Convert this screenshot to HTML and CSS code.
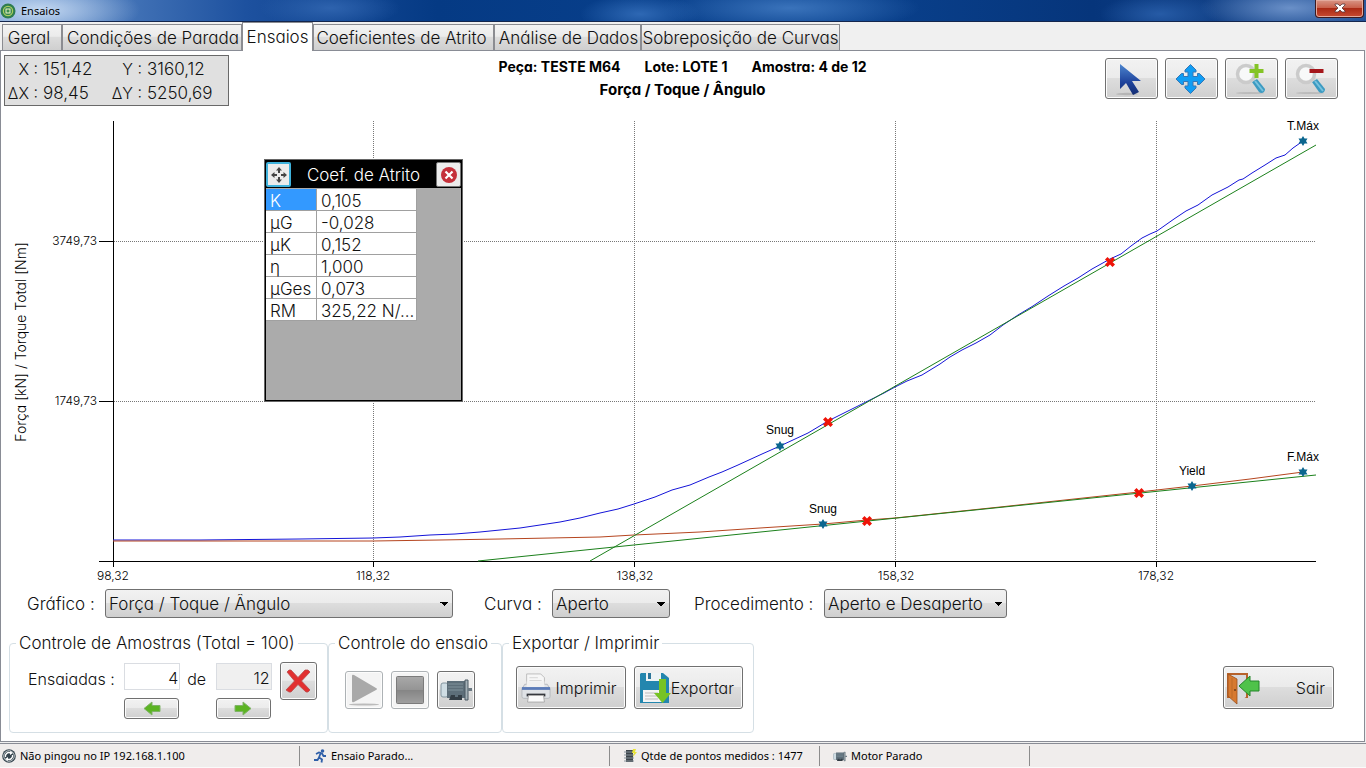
FILE: index.html
```html
<!DOCTYPE html>
<html lang="pt-BR">
<head>
<meta charset="utf-8">
<title>Ensaios</title>
<link rel="stylesheet" href="styles.css">
</head>
<body>
<div class="window">
  <header class="titlebar">
    <svg class="app-icon" width="16" height="16" viewBox="0 0 16 16"><circle cx="8" cy="8" r="7.5" fill="#2f7d50"/><circle cx="8" cy="8" r="4.6" fill="none" stroke="#a9cf5e" stroke-width="1.3"/><rect x="6" y="6" width="4" height="4" fill="#3c8d4d" stroke="#f1f7c5"/></svg>
    <span class="title">Ensaios</span>
    <button class="close" aria-label="Fechar"><svg width="12" height="10" viewBox="0 0 12 10"><path d="M1 1h3l2 2 2-2h3v1L8 5l3 3v1H8L6 7 4 9H1V8l3-3-3-3z" fill="#fff" stroke="#583638" stroke-width=".8"/></svg></button>
  </header>

  <nav class="tabs" role="tablist">
    <button class="tab tab-geral" role="tab">Geral</button>
    <button class="tab tab-cond" role="tab">Condições de Parada</button>
    <button class="tab tab-ensaios active" role="tab" aria-selected="true">Ensaios</button>
    <button class="tab tab-coef" role="tab">Coeficientes de Atrito</button>
    <button class="tab tab-dados" role="tab">Análise de Dados</button>
    <button class="tab tab-curvas" role="tab">Sobreposição de Curvas</button>
  </nav>

  <main class="page">
    <section class="head">
      <div class="readout">
        <span class="r">X :</span><span>151,42</span><span class="r">Y :</span><span>3160,12</span>
        <span class="r">ΔX :</span><span>98,45</span><span class="r">ΔY :</span><span>5250,69</span>
      </div>
      <div class="heading">
        <div class="heading-line"><span>Peça: TESTE M64</span><span>Lote: LOTE 1</span><span>Amostra: 4 de 12</span></div>
        <div class="heading-line heading-sub">Força / Toque / Ângulo</div>
      </div>
      <div class="tools">
        <button class="btn tool" aria-label="Selecionar"><svg width="32" height="34" viewBox="0 0 32 34"><defs><linearGradient id="arrow" x2="0" y2="1"><stop stop-color="#4d86cf"/><stop offset=".6" stop-color="#1e429b"/><stop offset="1" stop-color="#142d72"/></linearGradient></defs><ellipse cx="12" cy="32" rx="11" ry="1.2" fill="#b5b5b5"/><path d="M5 2v25l6-6 7 12 6-3-7-11h9z" fill="url(#arrow)"/></svg></button>
        <button class="btn tool" aria-label="Mover"><svg width="32" height="32" viewBox="0 0 32 32"><path d="M15.500 1.500l5.500 5.500v2h-3v4.500h4.500v-3h2L30 16l-5.500 5.500h-2v-3H18V23h3v2l-5.500 5.500L10 25v-2h3v-4.500H8.500v3h-2L1 16l5.500-5.500h2v3H13V9h-3V7z" fill="#109df4" stroke="#3477b5" stroke-width="1" stroke-linejoin="round"/></svg></button>
        <button class="btn tool" aria-label="Ampliar"><svg width="34" height="34" viewBox="0 0 34 34"><ellipse cx="16" cy="31" rx="14" ry="1" fill="#bbb"/><path d="M18 20l5-3 8 10q0 3-3 4-2 0-3-1z" fill="#3c9bc2"/><path d="M21 19l8 10" stroke="#79c2dd" stroke-width="2"/><circle cx="12" cy="12" r="8.500" fill="#f8f9f9" stroke="#cbcbcb" stroke-width="3.500"/><path d="M20.500 2h4v5h5v4h-5v5h-4v-5h-5v-4h5z" fill="#84c426"/></svg></button>
        <button class="btn tool" aria-label="Reduzir"><svg width="34" height="34" viewBox="0 0 34 34"><ellipse cx="16" cy="31" rx="14" ry="1" fill="#bbb"/><path d="M18 20l5-3 8 10q0 3-3 4-2 0-3-1z" fill="#3c9bc2"/><path d="M21 19l8 10" stroke="#79c2dd" stroke-width="2"/><circle cx="12" cy="12" r="8.500" fill="#f8f9f9" stroke="#cbcbcb" stroke-width="3.500"/><path d="M15.500 7h14v4h-14z" fill="#a5161b"/></svg></button>
      </div>
    </section>

    <section class="chart-area">
      <svg class="chart" viewBox="1 111 1363 474" role="img" aria-label="Força / Torque por ângulo">
        <defs>
          <path id="star" d="M0-5L1.500-2.500 4.500-2.500 3 0 4.500 2.500 1.500 2.500 0 5-1.500 2.500-4.500 2.500-3 0-4.500-2.500-1.500-2.500z" fill="#0b668f"/>
          <path id="cross" d="M-5-2.500L-2.500-5 0-2.500 2.500-5 5-2.500 2.500 0 5 2.500 2.500 5 0 2.500-2.500 5-5 2.500-2.500 0z" fill="#ee1408"/>
        </defs>
        <path class="grid" d="M114 241.500H1316M114 401.500H1316M373.500 121V561M634.500 121V561M895.500 121V561M1156.500 121V561"/>
        <path class="axis" d="M113.500 121V567M99 561.500H1316M99 241.500H113M99 401.500H113M373.500 561V567M634.500 561V567M895.500 561V567M1156.500 561V567"/>
        <path class="line torque" d="M113 540L200 540 300 539 373 538 400 537 430 535 455 534 480 532 500 530 520 528 540 525 560 522 580 518 600 513 618 509 634 504 655 497 672 490 690 485 709 477 722 472 738 465 762 454 780 446 808 433 828 421 846 412 868 401 884 393 895 387 907 381 922 375 940 364 950 357 962 350 976 343 990 335 1003 325 1018 315 1033 306 1048 296 1064 286 1078 278 1092 269 1110 259 1121 254 1131 246 1142 238 1150 234 1157 231 1174 219 1186 211 1198 205 1212 195 1228 187 1239 180 1243 179 1252 173 1265 165 1276 158 1285 155 1293 148 1303 141"/>
        <path class="line force" d="M113 541L373 541 440 540 500 539 600 537 634 535 700 532 760 528 823 524 867 520 895 518 1000 507 1139 492 1192 486 1250 479 1303 472"/>
        <path class="line fit" d="M590 561L1316 145M478 561L1316 475"/>
        <use href="#star" x="780" y="446"/><use href="#star" x="823" y="524"/><use href="#star" x="1192" y="486"/><use href="#star" x="1303" y="472"/><use href="#star" x="1303" y="141"/>
        <use href="#cross" x="828" y="422"/><use href="#cross" x="867" y="521"/><use href="#cross" x="1139" y="493"/><use href="#cross" x="1110" y="262"/>
        <g class="mark"><text x="780" y="434">Snug</text><text x="823" y="513">Snug</text><text x="1192" y="475">Yield</text><text x="1303" y="461">F.Máx</text><text x="1303" y="130">T.Máx</text></g>
        <g class="tick"><text x="113" y="580">98,32</text><text x="373" y="580">118,32</text><text x="635" y="580">138,32</text><text x="896" y="580">158,32</text><text x="1156" y="580">178,32</text></g>
        <g class="tick tick-y"><text x="97" y="245">3749,73</text><text x="97" y="405">1749,73</text></g>
        <text class="axis-name" transform="translate(26 342) rotate(-90)">Força [kN] / Torque Total [Nm]</text>
      </svg>

      <div class="float">
        <div class="float-head">
          <button class="mini mini-move" aria-label="Mover painel"><svg width="18" height="18" viewBox="0 0 18 18"><path d="M9 1l3 3.500H6zM9 17l3-3.500H6zM1 9l3.500-3v6zM17 9l-3.500-3v6z" fill="#444"/><path d="M9 4v3M9 11v3M4 9h3M11 9h3" stroke="#444" stroke-width="2"/></svg></button>
          <span>Coef. de Atrito</span>
          <button class="mini" aria-label="Fechar painel"><svg width="18" height="18" viewBox="0 0 18 18"><circle cx="9" cy="9" r="8" fill="#c5303a"/><path d="M5.500 5.500l7 7M12.500 5.500l-7 7" stroke="#fff" stroke-width="2.200"/></svg></button>
        </div>
        <table class="coefs">
          <tr><td class="sel">K</td><td>0,105</td></tr>
          <tr><td>µG</td><td>-0,028</td></tr>
          <tr><td>µK</td><td>0,152</td></tr>
          <tr><td>η</td><td>1,000</td></tr>
          <tr><td>µGes</td><td>0,073</td></tr>
          <tr><td>RM</td><td>325,22 N/...</td></tr>
        </table>
      </div>
    </section>

    <section class="filters">
      <label for="grafico">Gráfico :</label>
      <select id="grafico" class="combo combo-l"><option>Força / Toque / Ângulo</option></select>
      <label for="curva">Curva :</label>
      <select id="curva" class="combo combo-s"><option>Aperto</option></select>
      <label for="proc">Procedimento :</label>
      <select id="proc" class="combo combo-m"><option>Aperto e Desaperto</option></select>
    </section>

    <section class="bottom">
      <fieldset class="group g-samples">
        <legend>Controle de Amostras (Total = 100)</legend>
        <div class="samples">
          <label for="atual">Ensaiadas :</label>
          <div class="stack">
            <input id="atual" class="num" value="4">
            <button class="btn step" aria-label="Anterior"><svg width="18" height="15" viewBox="0 0 18 15"><path d="M1 7.500L9 1v3.500h8v6H9V14z" fill="#5cb423" stroke="#80b368"/></svg></button>
          </div>
          <label for="total" class="de">de</label>
          <div class="stack">
            <input id="total" class="num ro" value="12" readonly>
            <button class="btn step" aria-label="Próxima"><svg width="18" height="15" viewBox="0 0 18 15"><path d="M17 7.500L9 1v3.500H1v6h8V14z" fill="#5cb423" stroke="#80b368"/></svg></button>
          </div>
          <button class="btn sq" aria-label="Excluir"><svg width="26" height="26" viewBox="0 0 26 26"><path d="M2 4l2-2h2l7 7.500L20 2h3l2 2-8.500 9L25 22l-2 2h-2l-8-7.500L6 24H4l-3-2 8.500-9z" fill="#e23030" stroke="#b84b4b" stroke-width=".8"/></svg></button>
        </div>
      </fieldset>
      <fieldset class="group g-run">
        <legend>Controle do ensaio</legend>
        <div class="run">
          <button class="btn sq off" disabled aria-label="Iniciar"><svg width="32" height="32" viewBox="0 0 32 32"><ellipse cx="16" cy="30.500" rx="15" ry="1" fill="#bbb"/><path d="M4 2q0-2 2-1l22 13q2 1 0 2L6 28q-2 1-2-1z" fill="#a9a9a9"/></svg></button>
          <button class="btn sq off" disabled aria-label="Parar"><svg width="30" height="30" viewBox="0 0 30 30"><defs><linearGradient id="stop" x2="0" y2="1"><stop stop-color="#a9a9a9"/><stop offset=".5" stop-color="#949494"/><stop offset=".5" stop-color="#858585"/><stop offset="1" stop-color="#a0a0a0"/></linearGradient></defs><rect x="1.500" y="1.500" width="27" height="27" rx="1" fill="url(#stop)" stroke="#7b7b7b"/></svg></button>
          <button class="btn sq" aria-label="Motor"><svg width="32" height="24" viewBox="0 0 32 24"><use href="#motor"/></svg></button>
        </div>
      </fieldset>
      <fieldset class="group g-out">
        <legend>Exportar / Imprimir</legend>
        <div class="out">
          <button class="btn big"><svg width="30" height="34" viewBox="0 0 32 34"><path d="M6 2h15l4 4v12H6z" fill="#f6f6f6" stroke="#bbb"/><path d="M9 6h9M9 9h13M9 12h13" stroke="#d4d4d4"/><path d="M4 13h24l3 5v8q0 2-2 2H3q-2 0-2-2v-8z" fill="#dfe2e6" stroke="#b4b7bc"/><path d="M6 10h19v6H6z" fill="#f1f1f1"/><path d="M1 16h30v3H1z" fill="#5b7bb8"/><path d="M6 23h20v3H6z" fill="#35373d"/><path d="M8 25h16l1 7H7z" fill="#fafafa" stroke="#aaa"/></svg><span>Imprimir</span></button>
          <button class="btn big"><svg width="32" height="34" viewBox="0 0 32 34"><path d="M2 2h22l6 5v25H1V3z" fill="#2386ae"/><path d="M7 2h15v8H7z" fill="#eef3f5"/><path d="M9 2h3v6H9z" fill="#2d7599"/><path d="M4 19h20v12H4z" fill="#f4f4f4"/><path d="M6 22h13M6 25h13M6 28h13" stroke="#bbb"/><path d="M20 8h7v14h5l-8.500 10L15 22h5z" fill="#77c325"/></svg><span>Exportar</span></button>
        </div>
      </fieldset>
      <button class="btn big exit"><svg width="34" height="34" viewBox="0 0 34 34"><path d="M1 2h21v25H1z" fill="#b7622b"/><path d="M3 4h17v22l-9 6z" fill="#d9dadd"/><path d="M2 3l9 5v25l-9-8z" fill="#d77a31" stroke="#99501f" stroke-width=".8"/><path d="M6 7v20" stroke="#bd6a28"/><circle cx="9" cy="19" r="1" fill="#6e3c16"/><path d="M13 15l11-10v5h9v10h-9v5z" fill="#4fc24a" stroke="#25862a"/></svg><span>Sair</span></button>
    </section>
  </main>

  <footer class="status">
    <div class="cell"><svg width="14" height="14" viewBox="0 0 14 14"><circle cx="7" cy="7" r="6.800" fill="#33434d"/><circle cx="7" cy="7" r="5.300" fill="none" stroke="#dfe4e6" stroke-width=".8"/><path d="M3.500 8a3.500 3.500 0 0 1 5-4M10.500 6a3.500 3.500 0 0 1-5 4" fill="none" stroke="#fff" stroke-width="1.400"/><path d="M8 2l3 2-3 2zM6 12l-3-2 3-2z" fill="#fff"/></svg><span>Não pingou no IP 192.168.1.100</span></div>
    <div class="cell in"><svg width="14" height="14" viewBox="0 0 14 14"><circle cx="9.500" cy="2" r="1.800" fill="#2f5fa8"/><path d="M3 5l3-1.500 3 1 1.500 2.500H13M7.500 4.500L6 8.500l3 2-.5 3M6 8.500L4.500 11H1" fill="none" stroke="#2f5fa8" stroke-width="1.800"/></svg><span>Ensaio Parado...</span></div>
    <div class="cell in"><svg width="14" height="14" viewBox="0 0 14 14"><path d="M3 1h7v12H3z" fill="#3d444a"/><path d="M1 3h10M1 6h10M1 9h10M1 12h10" stroke="#88939b"/><path d="M10 0h3l-1 3h2l-4 5 1-4H9z" fill="#e8e337"/></svg><span>Qtde de pontos medidos : 1477</span></div>
    <div class="cell in"><svg width="14" height="11" viewBox="0 0 32 24"><defs><g id="motor"><rect x="1" y="5" width="7" height="14" rx="2" fill="#cfdde4" stroke="#8496a0"/><path d="M7 3h18v17h-8v2h-6v-2H7z" fill="#5d6e79"/><path d="M8 6h15M8 9h15M8 12h15" stroke="#80929c"/><path d="M11 17h4v2h3v-2h4v5H9z" fill="#333d45"/><path d="M25 2h3v20h-3z" fill="#a4b1b8" stroke="#4b5963"/><path d="M28 10h4v3h-4z" fill="#6c7a83"/></g></defs><use href="#motor"/></svg><span>Motor Parado</span></div>
  </footer>
</div>
</body>
</html>
```

FILE: styles.css
```css
* { box-sizing: border-box; }

body {
  margin: 0;
  background: #f0f0f0;
  color: #111;
  font: 300 17px/20px Inter, "Liberation Sans", sans-serif;
  font-feature-settings: "cv11";
}

button, input, select {
  font: inherit;
  font-feature-settings: inherit;
  color: inherit;
  margin: 0;
}

svg { display: block; flex: none; }

.window { display: flex; flex-direction: column; min-height: 100vh; }

/* title bar */
.titlebar {
  display: flex;
  align-items: center;
  height: 22px;
  padding: 0 2px 2px 0;
  border-bottom: 1px solid #14264d;
  background:
    radial-gradient(ellipse 100px 30px at 40px 10px, #c4d8f1, #b9d0ee00),
    radial-gradient(ellipse 70px 20px at 330px 8px, #2e63ae, #2e63ae00),
    radial-gradient(ellipse 60px 20px at 640px 14px, #2e68b4, #2e68b400),
    radial-gradient(ellipse 130px 24px at 790px 8px, #3a73bb, #3a73bb00),
    radial-gradient(ellipse 60px 20px at 1160px 14px, #265ba6, #265ba600),
    radial-gradient(ellipse 90px 24px at 1290px 8px, #6a90c8, #6a90c800),
    linear-gradient(90deg, #6b97d0, #1d519f 18%, #053a84 32%, #0a4390 60%, #06357b 80%, #1f4f96);
}
.app-icon { margin-top: 2px; }
.title { margin: 2px 0 0 5px; font: 11px/18px "Noto Sans", sans-serif; color: #000; flex: 1; }
.close {
  display: flex;
  align-items: center;
  justify-content: center;
  align-self: flex-start;
  width: 49px;
  height: 18px;
  padding: 0 0 2px;
  border: 1px solid #3c1a20;
  border-top: 0;
  border-radius: 0 0 4px 4px;
  box-shadow: inset 0 0 0 1px #e3a99c;
  background: linear-gradient(#d89585, #c9614c 45%, #ab2a15 50%, #c84b32);
}

/* tabs */
.tabs { display: flex; align-items: flex-end; height: 28px; padding-left: 2px; }
.tab {
  height: 26px;
  padding: 1px 0 0;
  border: 1px solid #8b8c91;
  border-bottom: 0;
  background: linear-gradient(#f3f3f3, #ebebeb 45%, #dcdcdc 50%, #cfcfcf);
  white-space: nowrap;
}
.tab.active { height: 29px; margin-bottom: -1px; background: #fff; padding-bottom: 2px; z-index: 1; }
.tab-geral { width: 60px; padding-right: 6px; }
.tab-cond { width: 180px; padding-left: 2px; }
.tab-ensaios { width: 71px; }
.tab-coef { width: 181px; padding-right: 4px; }
.tab-dados { width: 147px; padding-left: 2px; }
.tab-curvas { width: 199px; }

.page {
  flex: 1;
  display: flex;
  flex-direction: column;
  margin-right: 1px;
  background: #fff;
  border: 1px solid #898c95;
}

/* header */
.head { display: grid; grid-template-columns: 1fr auto 1fr; height: 60px; padding: 4px 3px 0; }
.readout {
  justify-self: start;
  display: grid;
  grid-template-columns: 33px 61px 33px 71px;
  column-gap: 5px;
  align-content: center;
  width: 225px;
  height: 51px;
  line-height: 24px;
  border: 1px solid #696969;
  background: #e0e0e0;
  white-space: nowrap;
}
.readout .r { text-align: right; font-size: 16px; }
.heading { font-weight: 700; font-size: 14px; line-height: 23px; text-align: center; color: #000; }
.heading-line { display: flex; justify-content: center; gap: 24px; }
.heading-sub { font-size: 15px; }
.tools { justify-self: end; display: flex; gap: 7px; padding: 3px 23px 0 0; }

.btn {
  display: flex;
  align-items: center;
  justify-content: center;
  padding: 0;
  border: 1px solid #707070;
  border-radius: 3px;
  box-shadow: inset 0 0 0 1px #fcfcfc;
  background: linear-gradient(#f2f2f2, #ebebeb 48%, #dddddd 50%, #cfcfcf);
}
.tool { width: 53px; height: 41px; padding-right: 2px; }

/* chart */
.chart-area { position: relative; }
.chart { width: 100%; height: auto; }
.grid { fill: none; stroke: #777; stroke-dasharray: 1 1; }
.axis { fill: none; stroke: #000; }
.line { fill: none; stroke-width: 1; }
.torque { stroke: #1414d8; }
.force { stroke: #b5451f; }
.fit { stroke: #1b801b; }
.mark { font: 12px "Liberation Sans", sans-serif; text-anchor: middle; }
.tick { font-size: 12px; text-anchor: middle; fill: #000; }
.tick-y { text-anchor: end; }
.axis-name { font-size: 14px; text-anchor: middle; }

/* floating panel */
.float {
  position: absolute;
  left: 263px;
  top: 48px;
  width: 199px;
  height: 243px;
  border: 2px solid #000;
  outline: 1px solid #666;
  outline-offset: -1px;
  background: #ababab;
}
.float-head {
  display: flex;
  align-items: center;
  justify-content: space-between;
  height: 27px;
  background: #000;
  color: #fff;
}
.mini {
  display: flex;
  align-items: center;
  justify-content: center;
  width: 25px;
  height: 25px;
  padding: 0;
  border: 1px solid #777;
  border-radius: 2px;
  background: #ececec;
}
.mini-move { border: 2px solid #3fb2dc; }
.coefs { border-collapse: separate; border-spacing: 0; table-layout: fixed; width: 151px; margin-top: 1px; background: #fff; }
.coefs td {
  height: 22px;
  padding: 3px 0 0 4px;
  line-height: 18px;
  border-right: 1px solid #a0a0a0;
  border-bottom: 1px solid #a0a0a0;
  white-space: nowrap;
}
.coefs td:first-child { width: 51px; }
.coefs .sel { background: #3399ff; color: #fff; }

/* filters */
.filters { display: flex; align-items: center; height: 37px; padding: 0 26px; white-space: nowrap; }
.combo {
  height: 29px;
  margin: 0 31px 0 0;
  padding: 0 3px;
  border: 1px solid #707070;
  border-radius: 3px;
  appearance: none;
  background:
    conic-gradient(from -45deg at 50% 100%, #000 90deg, #0000 0) right 4px top 12px / 8px 4px no-repeat,
    linear-gradient(#f2f2f2, #ebebeb 48%, #dddddd 50%, #cfcfcf);
}
.filters label:nth-of-type(1) { width: 78px; }
.filters label:nth-of-type(2) { width: 68px; }
.filters label:nth-of-type(3) { width: 130px; }
.combo-l { width: 348px; }
.combo-s { width: 118px; margin-right: 24px; }
.combo-m { width: 183px; }

/* bottom groups */
.bottom { display: flex; padding: 11px 30px 8px 8px; }
.group {
  min-width: 0;
  height: 100px;
  margin: 0;
  padding: 0 10px;
  border: 1px solid #d5dfe5;
  border-radius: 4px;
}
.group legend { margin-left: -4px; padding: 0 3px; white-space: nowrap; }
.g-samples { width: 319px; }
.g-run { width: 174px; }
.g-out { width: 252px; }
.samples { display: flex; align-items: flex-start; padding: 10px 0 0 8px; font-size: 16px; }
.samples > label { width: 98px; padding-top: 6px; white-space: nowrap; }
.samples > .de { width: 36px; padding-left: 7px; }
.stack { display: flex; flex-direction: column; gap: 8px; width: 56px; }
.num { width: 56px; height: 27px; padding: 2px 1px 0; border: 1px solid #dadde2; text-align: right; background: #fff; }
.ro { background: #f0f0f0; }
.step { width: 55px; height: 21px; }
.sq { width: 38px; height: 38px; }
.samples > .sq { margin: -1px 0 0 8px; }
.off { border-color: #adb2b5; background: #f4f4f4; }
.run { display: flex; gap: 8px; padding: 18px 0 0 6px; }
.out { display: flex; gap: 8px; padding: 13px 0 0 3px; }
.big { width: 111px; height: 43px; padding: 0 8px 0 4px; justify-content: space-between; font-size: 16px; }
.exit { margin: 33px 0 0 auto; padding-left: 2px; }

/* status bar */
.status {
  display: grid;
  grid-template-columns: 300px 310px 210px 210px 1fr;
  height: 26px;
  margin-top: 1px;
  padding: 2px 0;
  border-top: 1px solid #898c95;
  border-bottom: 2px solid #fafafa;
  background: #f0edec;
  font: 11px/20px "Noto Sans", sans-serif;
  color: #000;
}
.cell { display: flex; align-items: center; gap: 4px; padding-left: 2px; border-right: 1px solid #8c8c8c; white-space: nowrap; }
.in { padding-left: 13px; }
```
